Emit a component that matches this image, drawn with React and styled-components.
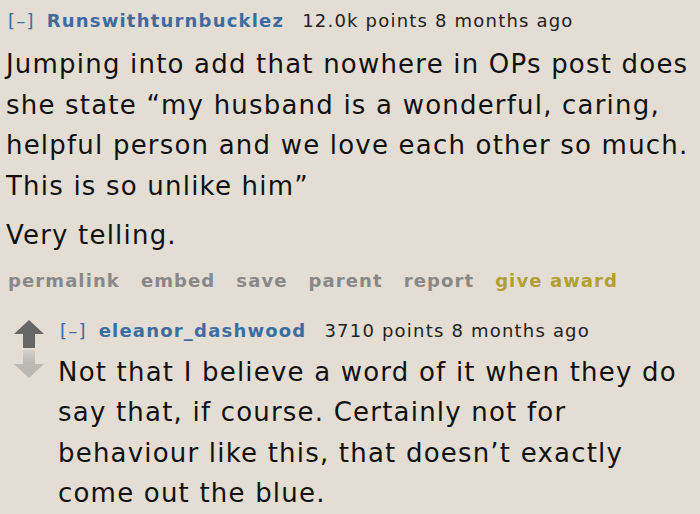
import styled, { createGlobalStyle } from "styled-components";

const Global = createGlobalStyle`
  html, body {
    margin: 0;
    padding: 0;
    background: #e3ddd3;
  }
  body {
    font-family: "DejaVu Sans", Verdana, sans-serif;
    color: #111;
  }
`;

const Page = styled.div`
  width: 700px;
  height: 514px;
  overflow: hidden;
  background: #e3ddd3;
`;

const Comment = styled.div`
  display: flex;
  padding-left: 6px;
  padding-top: ${(p) => p.$top || 0}px;
`;

const Votes = styled.div`
  display: flex;
  flex-direction: column;
  align-items: flex-start;
  width: 52px;
  padding-left: 7px;
  box-sizing: border-box;
  margin-top: -2px;
  flex-shrink: 0;

  svg + svg {
    margin-top: -2px;
  }
`;

const Entry = styled.div`
  flex: 1;
  min-width: 0;
`;

const Tagline = styled.div`
  font-size: 18px;
  line-height: 22px;
  letter-spacing: 1.2px;
  white-space: nowrap;
  padding-left: 2px;
`;

const Expand = styled.span`
  color: #3d6ca0;
`;

const Author = styled.span`
  color: #3d6ca0;
  font-weight: bold;
  margin-left: 12px;
`;

const Score = styled.span`
  color: #222;
  margin-left: 18px;
`;

const Body = styled.div`
  font-size: 26px;
  line-height: 40.5px;
  letter-spacing: 1.2px;
  white-space: nowrap;
  margin-top: ${(p) => p.$gap ?? 12}px;
  color: #111;

  p {
    margin: 0 0 9px;
  }
`;

const Buttons = styled.ul`
  list-style: none;
  margin: 13px 0 0;
  padding: 0 0 0 2px;
  display: flex;
  gap: 21px;
  font-size: 18px;
  font-weight: bold;
  letter-spacing: 1.1px;
  line-height: 24px;
`;

const Btn = styled.li`
  color: ${(p) => (p.$gold ? "#b19f36" : "#888")};
`;

const Arrow = ({ up }) => (
  <svg width="32" height="32" viewBox="0 0 32 32">
    {up ? (
      <path d="M16 2 L31 16 L22 16 L22 30 L10 30 L10 16 L1 16 Z" fill="#666" />
    ) : (
      <>
        <defs>
          <linearGradient id="dg" x1="0" y1="0" x2="0" y2="1">
            <stop offset="0" stopColor="#d2cec7" />
            <stop offset="0.45" stopColor="#bcb9b4" />
          </linearGradient>
        </defs>
        <path d="M10 2 L22 2 L22 16 L31 16 L16 30 L1 16 L10 16 Z" fill="url(#dg)" />
      </>
    )}
  </svg>
);

export default function App() {
  return (
    <Page>
      <Global />
      <Comment $top={10}>
        <Entry>
          <Tagline>
            <Expand>[–]</Expand>
            <Author>Runswithturnbucklez</Author>
            <Score>12.0k points 8 months ago</Score>
          </Tagline>
          <Body>
            <p>
              Jumping into add that nowhere in OPs post does
              <br />
              she state “my husband is a wonderful, caring,
              <br />
              helpful person and we love each other so much.
              <br />
              This is so unlike him”
            </p>
            <p>Very telling.</p>
          </Body>
          <Buttons>
            <Btn>permalink</Btn>
            <Btn>embed</Btn>
            <Btn>save</Btn>
            <Btn>parent</Btn>
            <Btn>report</Btn>
            <Btn $gold>give award</Btn>
          </Buttons>
        </Entry>
      </Comment>
      <Comment $top={27}>
        <Votes>
          <Arrow up />
          <Arrow />
        </Votes>
        <Entry>
          <Tagline>
            <Expand>[–]</Expand>
            <Author>eleanor_dashwood</Author>
            <Score>3710 points 8 months ago</Score>
          </Tagline>
          <Body $gap={10}>
            <p>
              Not that I believe a word of it when they do
              <br />
              say that, if course. Certainly not for
              <br />
              behaviour like this, that doesn’t exactly
              <br />
              come out the blue.
            </p>
          </Body>
        </Entry>
      </Comment>
    </Page>
  );
}
